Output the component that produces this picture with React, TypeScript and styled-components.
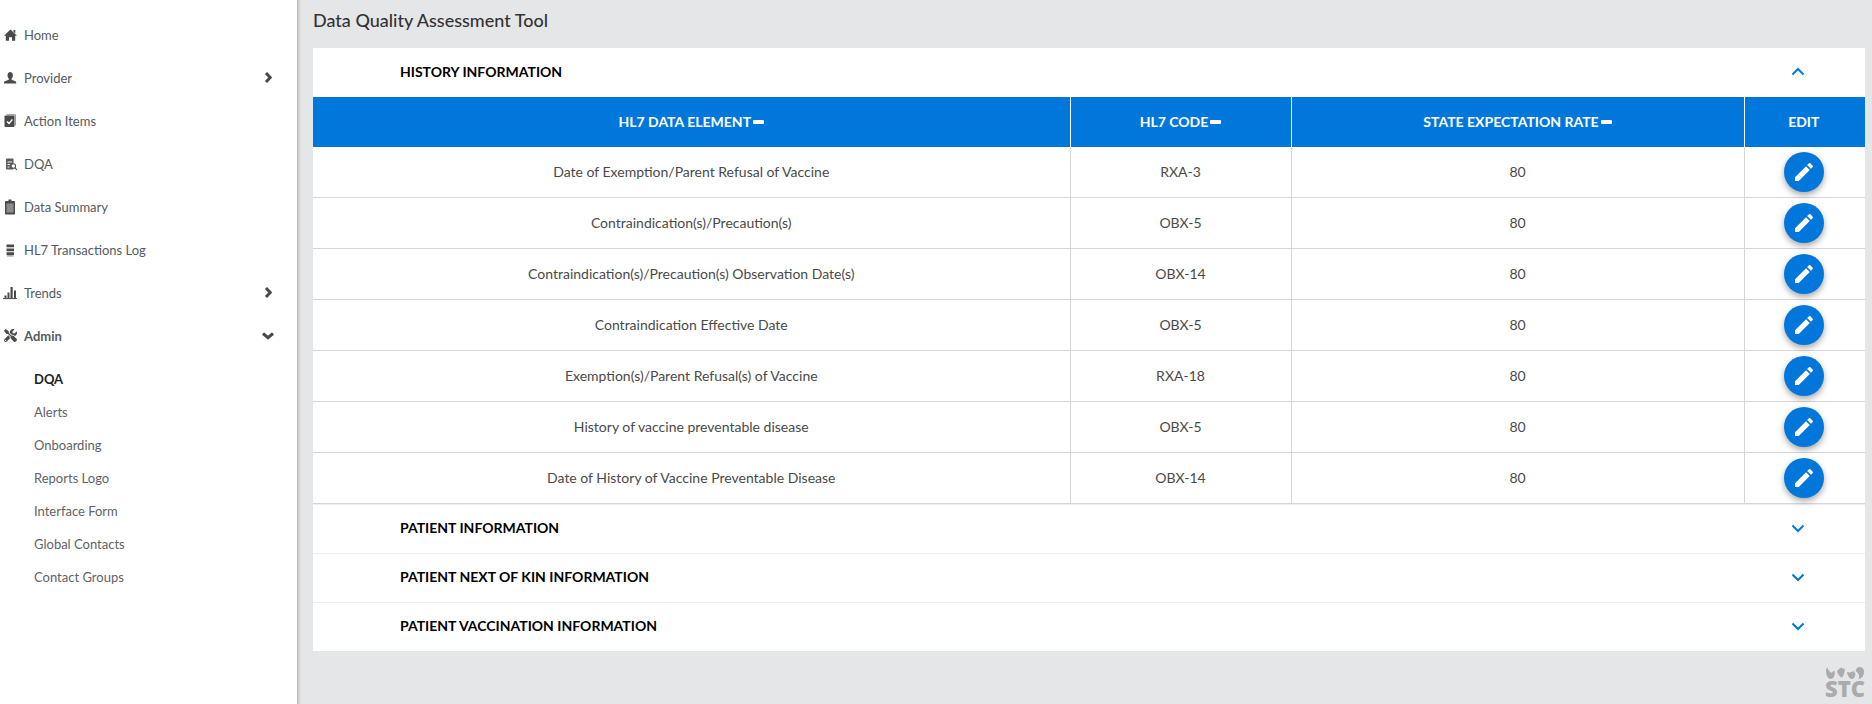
import { ReactElement, ReactNode } from "react";
import styled, { createGlobalStyle } from "styled-components";
import { FaTools } from "react-icons/fa";
import { MdEdit } from "react-icons/md";

const GlobalStyle = createGlobalStyle`
  html, body {
    margin: 0;
    padding: 0;
    height: 704px;
    overflow: hidden;
    background: #e5e6e8;
    font-family: Lato, "Open Sans", sans-serif;
  }
`;

const StyledMenuChevron = styled.svg`
  margin-right: 1px;
`;

const StyledAccordionChevron = styled.svg<{ $up?: boolean }>`
  margin-top: ${(p) => (p.$up ? "0" : "2px")};
`;

const homeIcon = (
  <svg width="14" height="14" viewBox="0 0 14 14">
    <path d="M6.500 1.500L13 7.800h-1.800v5H8V9.300H5v3.500H1.800v-5H0z" fill="#4a4a4a" />
    <path d="M9.500 2h1.800v3.400L9.500 3.700z" fill="#4a4a4a" />
  </svg>
);

const userIcon = (
  <svg width="14" height="14" viewBox="0 0 14 14">
    <path d="M3.500 4.200C3.500 2.400 4.700 1 6.200 1s2.700 1.400 2.700 3.200c0 1.500-.6 2.700-1.300 3.300v1.300l3.700 1.400c.7.300.9.800.9 1.400v.9H0v-.9c0-.6.200-1.100.9-1.400l3.900-1.400V7.500c-.7-.6-1.300-1.800-1.300-3.300z" fill="#4a4a4a" />
  </svg>
);

const actionIcon = (
  <svg width="14" height="14" viewBox="0 0 14 14">
    <rect x="0.500" y="1.500" width="10" height="11.500" rx="1" fill="#4a4a4a" />
    <path d="M2.500 0.800h8.800v10.700" stroke="#777" strokeWidth="0.900" fill="none" />
    <path d="M3 7.500l2 2 3.400-4" stroke="#fff" strokeWidth="1.500" fill="none" />
  </svg>
);

const dqaIcon = (
  <svg width="14" height="14" viewBox="0 0 14 14">
    <rect x="2" y="1.500" width="7.500" height="11" rx="0.800" fill="#5c5c5c" />
    <path d="M3.500 5h4.500M3.500 7.500h2.500M3.500 10h2" stroke="#fff" strokeWidth="0.900" />
    <circle cx="9.300" cy="9" r="2.300" fill="#fff" stroke="#555" strokeWidth="1.100" />
    <path d="M11 10.800l1.900 2" stroke="#555" strokeWidth="1.200" />
  </svg>
);

const summaryIcon = (
  <svg width="14" height="16" viewBox="0 0 14 16">
    <path d="M4.500 0.500h3v1.500h2.700a.8.800 0 0 1 .8.800v11.900a.8.800 0 0 1-.8.800H1.800a.8.800 0 0 1-.8-.8V2.800a.8.800 0 0 1 .8-.8h2.700z" fill="#4a4a4a" />
    <rect x="2.500" y="4.500" width="7" height="9" fill="#8c8c8c" />
  </svg>
);

const logIcon = (
  <svg width="14" height="14" viewBox="0 0 14 14">
    <path d="M2.500 1.500h7.500v2.800H2.500zM2.500 5.400h7.500v2.800H2.500zM2.500 9.300h7.500v2.800H2.500z" fill="#4a4a4a" />
    <path d="M3 12.900h6.500" stroke="#777" strokeWidth="1" />
  </svg>
);

const trendsIcon = (
  <svg width="14" height="14" viewBox="1 0 14 14" overflow="visible">
    <path d="M0 12.600h14" stroke="#4a4a4a" strokeWidth="1" />
    <path d="M1.500 9.500h2v3h-2zM4.500 6.500h2v6h-2zM7.500 1h2.200v11.500H7.500zM11 4.500h2v8h-2z" fill="#4a4a4a" />
  </svg>
);

const chevronRight = (
  <StyledMenuChevron width="9" height="11" viewBox="0 0 9 11">
    <path d="M2 1l4.200 4.500L2 10" fill="none" stroke="#4a4a4a" strokeWidth="3" />
  </StyledMenuChevron>
);

const chevronDown = (
  <svg width="12" height="8" viewBox="0 0 12 8">
    <path d="M1 1.500L6 5.700l5-4.200" fill="none" stroke="#4a4a4a" strokeWidth="3" />
  </svg>
);

const menu: { label: string; icon: ReactNode; chevron?: ReactNode; open?: boolean }[] = [
  { label: "Home", icon: homeIcon },
  { label: "Provider", icon: userIcon, chevron: chevronRight },
  { label: "Action Items", icon: actionIcon },
  { label: "DQA", icon: dqaIcon },
  { label: "Data Summary", icon: summaryIcon },
  { label: "HL7 Transactions Log", icon: logIcon },
  { label: "Trends", icon: trendsIcon, chevron: chevronRight },
  { label: "Admin", icon: <FaTools size={13} color="#4a4a4a" />, chevron: chevronDown, open: true },
];

const subMenu = ["DQA", "Alerts", "Onboarding", "Reports Logo", "Interface Form", "Global Contacts", "Contact Groups"];

const rows = [
  ["Date of Exemption/Parent Refusal of Vaccine", "RXA-3"],
  ["Contraindication(s)/Precaution(s)", "OBX-5"],
  ["Contraindication(s)/Precaution(s) Observation Date(s)", "OBX-14"],
  ["Contraindication Effective Date", "OBX-5"],
  ["Exemption(s)/Parent Refusal(s) of Vaccine", "RXA-18"],
  ["History of vaccine preventable disease", "OBX-5"],
  ["Date of History of Vaccine Preventable Disease", "OBX-14"],
];

const closedSections = ["PATIENT INFORMATION", "PATIENT NEXT OF KIN INFORMATION", "PATIENT VACCINATION INFORMATION"];

function AccordionChevron({ up }: { up?: boolean }): ReactElement {
  return (
    <StyledAccordionChevron $up={up} width="14" height="9" viewBox="0 0 14 9">
      <path d={up ? "M1.500 7.500L7 2l5.500 5.500" : "M1.500 1.500L7 7l5.500-5.500"} fill="none" stroke="#0277db" strokeWidth="2" />
    </StyledAccordionChevron>
  );
}

export default function App(): ReactElement {
  return (
    <StyledPage>
      <GlobalStyle />
      <StyledSidebar>
        {menu.map((item) => (
          <StyledMenuItem key={item.label}>
            <StyledMenuIcon>{item.icon}</StyledMenuIcon>
            <StyledMenuLabel $open={item.open}>{item.label}</StyledMenuLabel>
            {item.chevron}
          </StyledMenuItem>
        ))}
        <StyledSubList>
          {subMenu.map((label, i) => (
            <StyledSubItem key={label} $active={i === 0}>
              {label}
            </StyledSubItem>
          ))}
        </StyledSubList>
      </StyledSidebar>
      <StyledMain>
        <StyledTitle>Data Quality Assessment Tool</StyledTitle>
        <StyledCard>
          <StyledSectionHeader $first>
            <span>HISTORY INFORMATION</span>
            <AccordionChevron up />
          </StyledSectionHeader>
          <StyledTable>
            <colgroup>
              <col style={{ width: 757 }} />
              <col style={{ width: 221 }} />
              <col style={{ width: 453 }} />
              <col style={{ width: 121 }} />
            </colgroup>
            <thead>
              <tr>
                <StyledHeadCell>
                  HL7 DATA ELEMENT
                  <StyledSortDash />
                </StyledHeadCell>
                <StyledHeadCell>
                  HL7 CODE
                  <StyledSortDash />
                </StyledHeadCell>
                <StyledHeadCell>
                  STATE EXPECTATION RATE
                  <StyledSortDash />
                </StyledHeadCell>
                <StyledEditHeadCell>EDIT</StyledEditHeadCell>
              </tr>
            </thead>
            <tbody>
              {rows.map(([element, code]) => (
                <tr key={element}>
                  <StyledCell>{element}</StyledCell>
                  <StyledCell>{code}</StyledCell>
                  <StyledCell>80</StyledCell>
                  <StyledEditCell>
                    <StyledEditButton>
                      <MdEdit size={24} color="#fff" />
                    </StyledEditButton>
                  </StyledEditCell>
                </tr>
              ))}
            </tbody>
          </StyledTable>
          {closedSections.map((title) => (
            <StyledSectionHeader key={title}>
              <span>{title}</span>
              <AccordionChevron />
            </StyledSectionHeader>
          ))}
        </StyledCard>
        <StyledLogo>
          <svg width="38" height="14" viewBox="0 0 38 14">
            <path d="M0 4.500C0 3 .8 2 1.500 1.500c.6 2.500 2 4.500 4.200 5.300L8 4.500c.8 1.200 1 3 .5 4.700C7.900 11.500 6.500 13 4.500 13 1.800 13 0 9 0 4.500z" fill="#a9abad" />
            <path d="M11 5.500c1.200-2 3-3.500 4.500-4 .7 1 2 1.300 3.500 1.200-.2 3-1.200 6.500-3 9-2.300-1-4-3.500-5-6.200z" fill="#a9abad" />
            <path d="M21 6c.6 3.500 2.200 6.500 5 7 2.400-.3 3.500-2.500 3.300-5.500L27.500 5c-1.500 1.300-3.800 2-6.500 1z" fill="#a9abad" />
            <path d="M29.500 5c.5-2.700 2.500-4 4.500-4s4 1.700 4 4.500c0 3.700-2 7.500-5.500 7.500 1-1.800 1.300-5.500-3-8z" fill="#a9abad" />
          </svg>
          <StyledLogoText>STC</StyledLogoText>
        </StyledLogo>
      </StyledMain>
    </StyledPage>
  );
}

const StyledPage = styled.div`
  display: flex;
  height: 704px;
  width: 1872px;
`;

const StyledSidebar = styled.nav`
  background: #fff;
  box-shadow: 1px 0 2px 1px #bdbdbd;
  box-sizing: border-box;
  flex: 0 0 297px;
  padding-top: 13px;
`;

const StyledMenuItem = styled.div`
  align-items: center;
  display: flex;
  height: 43px;
  padding-left: 4px;
  padding-right: 23px;
`;

const StyledMenuIcon = styled.span`
  align-items: center;
  display: flex;
  justify-content: flex-start;
  width: 20px;
`;

const StyledMenuLabel = styled.span<{ $open?: boolean }>`
  color: #565a5e;
  flex: 1;
  font-size: 13px;
  font-weight: ${(p) => (p.$open ? 700 : 400)};
`;

const StyledSubList = styled.div`
  padding-top: 5px;
`;

const StyledSubItem = styled.div<{ $active?: boolean }>`
  align-items: center;
  color: ${(p) => (p.$active ? "#222" : "#5f6366")};
  display: flex;
  font-size: 13px;
  font-weight: ${(p) => (p.$active ? 700 : 400)};
  height: 33px;
  padding-left: 34px;
`;

const StyledMain = styled.main`
  flex: 1;
  padding: 0 7px 0 16px;
  position: relative;
`;

const StyledTitle = styled.h1`
  color: #333;
  font-size: 18px;
  font-weight: 500;
  height: 48px;
  line-height: 40px;
  margin: 0;
`;

const StyledCard = styled.section`
  background: #fff;
`;

const StyledSectionHeader = styled.div<{ $first?: boolean }>`
  align-items: center;
  border-top: ${(p) => (p.$first ? "none" : "1px solid #eee")};
  box-sizing: border-box;
  color: #000;
  display: flex;
  font-size: 14px;
  font-weight: 700;
  height: 49px;
  justify-content: space-between;
  padding: 0 60px ${(p) => (p.$first ? "2px" : "3px")} 87px;
`;

const StyledTable = styled.table`
  border-bottom: 1px solid #d6d6d6;
  border-collapse: collapse;
  table-layout: fixed;
  width: 100%;
`;

const StyledHeadCell = styled.th`
  background: #0277db;
  border-left: 1px solid #fff;
  color: #fff;
  font-size: 14px;
  font-weight: 700;
  height: 49px;
  padding: 0 0 1px;
  text-align: center;

  &:first-child {
    border-left: none;
  }
`;

const StyledEditHeadCell = styled(StyledHeadCell)`
  padding-right: 2px;
`;

const StyledSortDash = styled.span`
  background: #fff;
  border-radius: 1px;
  display: inline-block;
  height: 4px;
  margin-left: 2px;
  vertical-align: 3px;
  width: 11px;
`;

const StyledCell = styled.td`
  border-left: 1px solid #d6d6d6;
  border-top: 1px solid #d6d6d6;
  color: #4a4a4a;
  font-size: 14px;
  height: 49px;
  padding: 0 0 1px;
  text-align: center;

  tr:first-child > & {
    border-top: none;
  }

  &:first-child {
    border-left: none;
  }
`;

const StyledEditCell = styled(StyledCell)`
  height: 50px;
  padding: 0 2px 0 0;
`;

const StyledEditButton = styled.button`
  align-items: center;
  background: #0277db;
  border: none;
  border-radius: 50%;
  box-shadow: 0 3px 6px rgba(0, 0, 0, 0.35);
  display: inline-flex;
  height: 40px;
  justify-content: center;
  padding: 0;
  vertical-align: middle;
  width: 40px;
`;

const StyledLogo = styled.div`
  align-items: center;
  bottom: 7px;
  display: flex;
  flex-direction: column;
  position: absolute;
  right: 7px;
`;

const StyledLogoText = styled.span`
  color: #a9abad;
  font-family: "Open Sans", "Liberation Sans", sans-serif;
  font-size: 22px;
  font-weight: 800;
  line-height: 17px;
`;
